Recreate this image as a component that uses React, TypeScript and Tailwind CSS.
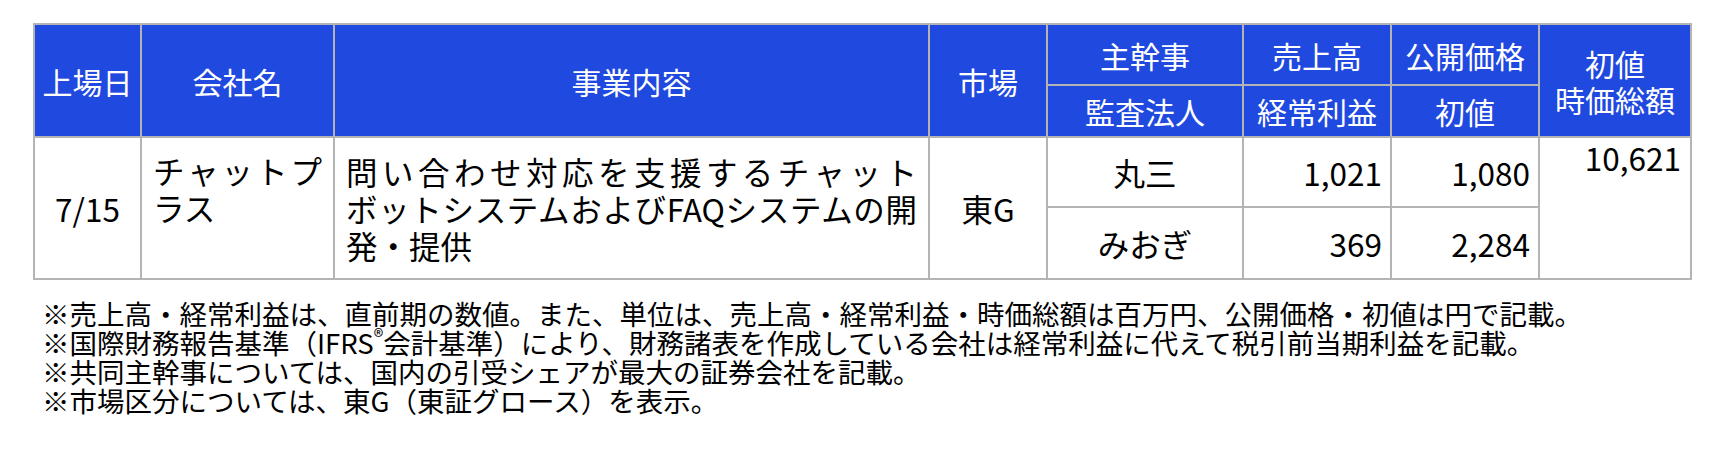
import React from 'react';

const jp = '"Noto Sans CJK JP", "Noto Sans", sans-serif';

const th = 'border-2 border-[#b4b4b4] bg-[#2049e0] text-white font-normal text-[30px] leading-[36px] text-center align-middle p-0';
const td = 'border-2 border-[#b4b4b4] text-black text-[31.5px] leading-[37px] p-0';

// lines of the cells are fixed as in the source slide; the full lines are spread
const spread = 'block text-justify [text-align-last:justify]';

export default function App() {
  return (
    <div lang="ja" className="w-[1727px] h-[452px] bg-white pl-[33px] pt-[23px]" style={{ fontFamily: jp }}>
      <table className="table-fixed border-collapse w-[1657px]">
        <colgroup>
          <col className="w-[107px]" />
          <col className="w-[193px]" />
          <col className="w-[595px]" />
          <col className="w-[118px]" />
          <col className="w-[196px]" />
          <col className="w-[148px]" />
          <col className="w-[148px]" />
          <col className="w-[152px]" />
        </colgroup>
        <thead>
          <tr className="h-[61px]">
            <th rowSpan={2} className={th}>上場日</th>
            <th rowSpan={2} className={th}>会社名</th>
            <th rowSpan={2} className={th}>事業内容</th>
            <th rowSpan={2} className={th}>市場</th>
            <th className={th}>主幹事</th>
            <th className={th}>売上高</th>
            <th className={th}>公開価格</th>
            <th rowSpan={2} className={th}>
              初値
              <br />
              時価総額
            </th>
          </tr>
          <tr className="h-[52px]">
            <th className={th}>監査法人</th>
            <th className={th}>経常利益</th>
            <th className={th}>初値</th>
          </tr>
        </thead>
        <tbody>
          <tr className="h-[70px]">
            <td rowSpan={2} className={`${td} text-center align-middle`}>7/15</td>
            <td rowSpan={2} className={`${td} align-top px-[11px] pt-[14px]`}>
              <span className={spread}>チャットプ</span>
              <span className="block">ラス</span>
            </td>
            <td rowSpan={2} className={`${td} align-middle px-[11px]`}>
              <span className={spread}>問い合わせ対応を支援するチャット</span>
              <span className={spread}>ボットシステムおよびFAQシステムの開</span>
              <span className="block">発・提供</span>
            </td>
            <td rowSpan={2} className={`${td} text-center align-middle`}>東G</td>
            <td className={`${td} text-center align-middle`}>丸三</td>
            <td className={`${td} text-right align-middle pr-[8px]`}>1,021</td>
            <td className={`${td} text-right align-middle pr-[8px]`}>1,080</td>
            <td rowSpan={2} className={`${td} text-right align-top pr-[9px] pt-[1px]`}>10,621</td>
          </tr>
          <tr className="h-[72px]">
            <td className={`${td} text-center align-middle`}>みおぎ</td>
            <td className={`${td} text-right align-middle pr-[8px]`}>369</td>
            <td className={`${td} text-right align-middle pr-[8px]`}>2,284</td>
          </tr>
        </tbody>
      </table>

      <div className="pl-[9px] pt-[19px] text-[27.5px] leading-[29px] text-black">
        <p>※売上高・経常利益は、直前期の数値。また、単位は、売上高・経常利益・時価総額は百万円、公開価格・初値は円で記載。</p>
        <p>※国際財務報告基準（IFRS<sup className="text-[20px]">®</sup>会計基準）により、財務諸表を作成している会社は経常利益に代えて税引前当期利益を記載。</p>
        <p>※共同主幹事については、国内の引受シェアが最大の証券会社を記載。</p>
        <p>※市場区分については、東G（東証グロース）を表示。</p>
      </div>
    </div>
  );
}
